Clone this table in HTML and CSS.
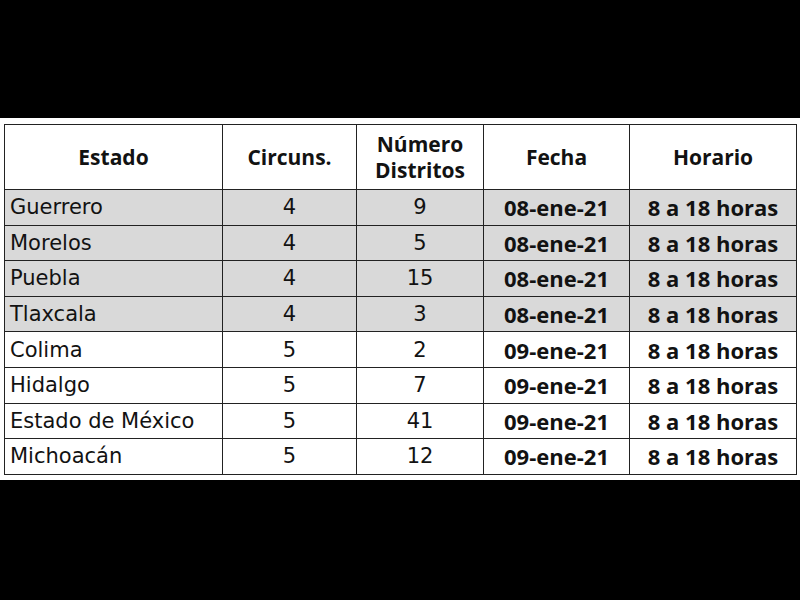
FILE: index.html
```html
<!DOCTYPE html>
<html lang="es">
<head>
<meta charset="utf-8">
<title>Calendario</title>
<link rel="stylesheet" href="styles.css">
</head>
<body>
<div class="sheet">
<table class="grid">
<colgroup>
<col class="c1"><col class="c2"><col class="c3"><col class="c4"><col class="c5">
</colgroup>
<thead>
<tr class="head">
<th>Estado</th><th>Circuns.</th><th>Número<br>Distritos</th><th>Fecha</th><th>Horario</th>
</tr>
</thead>
<tbody>
<tr class="gray"><td class="name">Guerrero</td><td>4</td><td>9</td><td class="b">08-ene-21</td><td class="b">8 a 18 horas</td></tr>
<tr class="gray"><td class="name">Morelos</td><td>4</td><td>5</td><td class="b">08-ene-21</td><td class="b">8 a 18 horas</td></tr>
<tr class="gray"><td class="name">Puebla</td><td>4</td><td>15</td><td class="b">08-ene-21</td><td class="b">8 a 18 horas</td></tr>
<tr class="gray"><td class="name">Tlaxcala</td><td>4</td><td>3</td><td class="b">08-ene-21</td><td class="b">8 a 18 horas</td></tr>
<tr><td class="name">Colima</td><td>5</td><td>2</td><td class="b">09-ene-21</td><td class="b">8 a 18 horas</td></tr>
<tr><td class="name">Hidalgo</td><td>5</td><td>7</td><td class="b">09-ene-21</td><td class="b">8 a 18 horas</td></tr>
<tr><td class="name">Estado de México</td><td>5</td><td>41</td><td class="b">09-ene-21</td><td class="b">8 a 18 horas</td></tr>
<tr><td class="name">Michoacán</td><td>5</td><td>12</td><td class="b">09-ene-21</td><td class="b">8 a 18 horas</td></tr>
</tbody>
</table>
</div>
</body>
</html>
```
FILE: styles.css
```css
html, body {
  margin: 0;
  padding: 0;
  background: #000;
  width: 800px;
  height: 600px;
  overflow: hidden;
}
.sheet {
  margin-top: 118px;
  background: #fff;
  height: 362px;
  box-sizing: border-box;
  padding: 6px 4px 0 4px;
}
.grid {
  border-collapse: collapse;
  table-layout: fixed;
  width: 792px;
  color: #121212;
  font-family: "DejaVu Sans", sans-serif;
  font-size: 21px;
}
.c1 { width: 218px; }
.c2 { width: 134px; }
.c3 { width: 127px; }
.c4 { width: 146px; }
.c5 { width: 167px; }
.grid th, .grid td {
  border: 1.6px solid #222;
  padding: 0;
  text-align: center;
  vertical-align: middle;
  white-space: nowrap;
}
.grid th {
  font-family: "Open Sans", sans-serif;
  font-weight: 700;
  font-size: 21px;
  line-height: 26px;
  height: 64px;
}
.grid td {
  height: 34.6px;
  line-height: 24px;
}
.grid td.name {
  text-align: left;
  padding-left: 5px;
}
.grid td.b {
  font-family: "Open Sans", sans-serif;
  font-weight: 700;
  font-size: 22px;
}
.gray td {
  background: #d9d9d9;
}
```
